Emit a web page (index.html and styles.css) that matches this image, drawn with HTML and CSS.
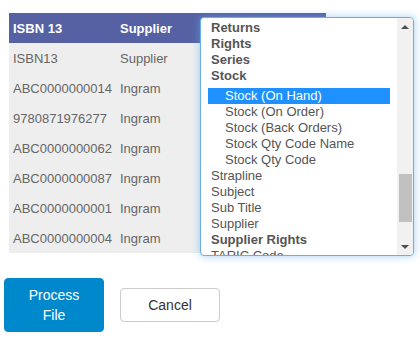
FILE: index.html
```html
<!DOCTYPE html>
<html>
<head>
<meta charset="utf-8">
<link rel="stylesheet" href="styles.css">
</head>
<body>
<div class="page">
  <div class="grid-wrap">
    <table class="grid">
      <thead>
        <tr><th class="c1">ISBN 13</th><th class="c2">Supplier</th><th class="c3"></th></tr>
      </thead>
      <tbody>
        <tr><td>ISBN13</td><td>Supplier</td><td></td></tr>
        <tr><td>ABC0000000014</td><td>Ingram</td><td></td></tr>
        <tr><td>9780871976277</td><td>Ingram</td><td></td></tr>
        <tr><td>ABC0000000062</td><td>Ingram</td><td></td></tr>
        <tr><td>ABC0000000087</td><td>Ingram</td><td></td></tr>
        <tr><td>ABC0000000001</td><td>Ingram</td><td></td></tr>
        <tr><td>ABC0000000004</td><td>Ingram</td><td></td></tr>
      </tbody>
    </table>
    <div class="listbox">
      <div class="list">
        <div class="grp">Returns</div>
        <div class="grp">Rights</div>
        <div class="grp">Series</div>
        <div class="grp stock">Stock</div>
        <div class="opt sub sel">Stock (On Hand)</div>
        <div class="opt sub">Stock (On Order)</div>
        <div class="opt sub">Stock (Back Orders)</div>
        <div class="opt sub">Stock Qty Code Name</div>
        <div class="opt sub">Stock Qty Code</div>
        <div class="opt">Strapline</div>
        <div class="opt">Subject</div>
        <div class="opt">Sub Title</div>
        <div class="opt">Supplier</div>
        <div class="grp">Supplier Rights</div>
        <div class="opt">TARIC Code</div>
      </div>
      <div class="sbar">
        <span class="arrow up"></span>
        <span class="thumb"></span>
        <span class="arrow down"></span>
      </div>
    </div>
  </div>
  <div class="actions">
    <button class="btn primary">Process<br>File</button>
    <button class="btn default">Cancel</button>
  </div>
</div>
</body>
</html>
```
FILE: styles.css
```css
* { box-sizing: border-box; }
html, body { margin: 0; padding: 0; background: #fff; }
body { font-family: "Liberation Sans", Arial, sans-serif; font-size: 13px; color: #555; }
.page { padding: 13px 0 0 0; }
.grid-wrap { position: relative; height: 240px; }
.grid { border-collapse: collapse; margin-left: 9px; width: 317px; background: #eeeeee; font-size: 13px; }
.grid th, .grid td { height: 30px; padding: 0 0 0 4px; text-align: left; vertical-align: middle; white-space: nowrap; }
.grid th { background: #5661a4; color: #fff; font-weight: bold; }
.grid td { color: #666; }
.grid .c1 { width: 107px; }
.grid .c2 { width: 80px; }

.listbox {
  position: absolute; left: 200px; top: 4px; width: 214px; height: 239px;
  background: #fff; border: 1px solid #66afe9; border-radius: 4px;
  box-shadow: 0 0 8px rgba(102, 175, 233, 0.6);
  overflow: hidden;
}
.list { padding: 2px 23px 0 7px; color: #555; font-size: 13px; }
.grp, .opt { height: 16px; line-height: 16px; white-space: nowrap; }
.grp { font-weight: bold; padding-left: 3px; }
.grp.stock { margin-bottom: 4px; }
.opt { padding-left: 3px; }
.opt.sub { padding-left: 17px; }
.opt.sel { background: #1e90ff; color: #fff; }

.sbar { position: absolute; top: 0; right: 0; bottom: 0; width: 16px; background: #f1f1f1; }
.arrow { position: absolute; left: 4px; width: 0; height: 0; border-left: 4px solid transparent; border-right: 4px solid transparent; }
.arrow.up { top: 7px; border-bottom: 4px solid #505050; }
.arrow.down { bottom: 6px; border-top: 4px solid #505050; }
.thumb { position: absolute; left: 2px; right: 1px; top: 156px; height: 48px; background: #c1c1c1; }

.actions { display: flex; align-items: center; gap: 16px; padding: 25px 0 0 4px; }
.btn { font-family: "Liberation Sans", Arial, sans-serif; font-size: 14px; width: 100px; border-radius: 4px; line-height: 20px; padding: 6px 0; cursor: pointer; }
.btn.primary { background: #0088cc; color: #fff; border: 1px solid #0088cc; height: 54px; }
.btn.default { background: #fff; color: #333; border: 1px solid #ccc; height: 34px; }
```
